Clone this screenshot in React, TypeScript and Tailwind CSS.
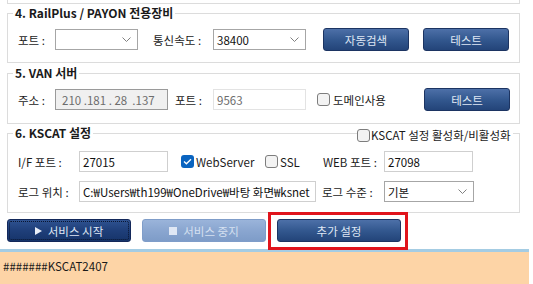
import React from "react";

function Chevron() {
  return (
    <svg width="9" height="5" viewBox="0 0 9 5" className="shrink-0">
      <path d="M0.5 0.5 L4.5 4.5 L8.5 0.5" fill="none" stroke="#808080" strokeWidth="1" />
    </svg>
  );
}

function Combo({ cls, value }: { cls: string; value?: string }) {
  return (
    <div className={`flex h-[21px] items-center justify-between border border-[#a6a6a6] bg-white pl-[3px] pr-[6px] ${cls}`}>
      <span className="leading-[16px] text-[#111]">{value}</span>
      <Chevron />
    </div>
  );
}

function Box({ cls, value }: { cls: string; value: string }) {
  return (
    <div className={`flex h-[21px] items-center overflow-hidden whitespace-nowrap border border-[#cfcfcf] bg-white pl-[3px] ${cls}`}>
      <span className="leading-[16px] text-[#111]">{value}</span>
    </div>
  );
}

function Check({ checked }: { checked?: boolean }) {
  if (checked) {
    return (
      <span className="flex h-[13px] w-[13px] shrink-0 items-center justify-center rounded-[3px] bg-[#0a64c0]">
        <svg width="9" height="7" viewBox="0 0 9 7">
          <path d="M1 3.5 L3.4 5.8 L8 1.2" fill="none" stroke="#fff" strokeWidth="1.3" />
        </svg>
      </span>
    );
  }
  return <span className="block h-[13px] w-[13px] shrink-0 rounded-[3px] border border-[#7d7d7d] bg-[#f3f3f3]" />;
}

function BlueButton({ cls, children }: { cls: string; children: React.ReactNode }) {
  return (
    <div
      className={`flex h-[23px] items-center justify-center rounded-[3px] border border-[#1c3462] bg-gradient-to-b from-[#4d70a8] via-[#33588f] to-[#234479] text-[#dfe7f4] leading-[16px] ${cls}`}
    >
      {children}
    </div>
  );
}

export default function App() {
  return (
    <div className="relative flex h-[284px] w-[533px] flex-col overflow-hidden bg-white font-['Noto_Sans_CJK_KR',sans-serif] text-[11.5px] text-[#1a1a1a]">
      {/* tail of previous group */}
      <div className="ml-[7px] h-[4px] w-[513px] border-x border-b border-[#dcdcdc]" />

      {/* Group 4 */}
      <fieldset className="ml-[7px] mt-[1px] w-[513px] min-w-0 border border-[#dcdcdc]">
        <legend className="ml-[5px] px-[2px] text-[12px] font-bold leading-[16px] text-[#1a1a1a]">4. RailPlus / PAYON 전용장비</legend>
        <div className="flex h-[23px] items-center pl-[10px] mt-[7px] mb-[11px]">
          <span className="w-[37px] leading-[16px]">포트 :</span>
          <Combo cls="w-[83px]" />
          <span className="ml-[15px] w-[60px] leading-[16px]">통신속도 :</span>
          <Combo cls="w-[93px]" value="38400" />
          <BlueButton cls="ml-[17px] w-[86px]">자동검색</BlueButton>
          <BlueButton cls="ml-[14px] w-[86px]">테스트</BlueButton>
        </div>
      </fieldset>

      {/* Group 5 */}
      <fieldset className="ml-[7px] mt-[2px] w-[513px] min-w-0 border border-[#dcdcdc]">
        <legend className="ml-[5px] px-[2px] text-[12px] font-bold leading-[16px]">5. VAN 서버</legend>
        <div className="flex h-[23px] items-center pl-[10px] pr-[9px] mt-[7px] mb-[12px]">
          <span className="w-[37px] leading-[16px]">주소 :</span>
          <div className="flex h-[21px] w-[113px] items-center border border-[#9a9a9a] bg-[#f0f0f0] pl-[6px] text-[#6d6d6d]">
            <span className="leading-[16px] whitespace-pre">210 .181 . 28  .137</span>
          </div>
          <span className="ml-[7px] w-[38px] leading-[16px]">포트 :</span>
          <div className="flex h-[21px] w-[93px] items-center border border-[#e3e3e3] bg-white pl-[3px] text-[#6d6d6d]">
            <span className="leading-[16px]">9563</span>
          </div>
          <div className="ml-[11px] flex items-center gap-[3px]">
            <Check />
            <span className="leading-[16px]">도메인사용</span>
          </div>
          <BlueButton cls="ml-auto w-[86px]">테스트</BlueButton>
        </div>
      </fieldset>

      {/* Group 6 */}
      <div className="relative mt-[1px]">
        <fieldset className="ml-[7px] w-[513px] min-w-0 border border-[#dcdcdc]">
          <legend className="ml-[5px] px-[2px] text-[12px] font-bold leading-[16px]">6. KSCAT 설정</legend>
          <div className="mt-[10px] flex h-[21px] items-center pl-[10px]">
            <span className="w-[61px] leading-[16px]">I/F 포트 :</span>
            <Box cls="w-[89px]" value="27015" />
            <div className="ml-[13px] flex w-[84px] items-center gap-[2px]">
              <Check checked />
              <span className="leading-[16px]">WebServer</span>
            </div>
            <div className="flex w-[58px] items-center gap-[2px]">
              <Check />
              <span className="leading-[16px]">SSL</span>
            </div>
            <span className="w-[61px] leading-[16px]">WEB 포트 :</span>
            <Box cls="w-[89px]" value="27098" />
          </div>
          <div className="mb-[10px] mt-[9px] flex h-[21px] items-center pl-[10px]">
            <span className="w-[61px] leading-[16px]">로그 위치 :</span>
            <Box cls="w-[237px]" value="C:₩Users₩th199₩OneDrive₩바탕 화면₩ksnet" />
            <span className="ml-[6px] w-[62px] leading-[16px]">로그 수준 :</span>
            <Combo cls="w-[90px]" value="기본" />
          </div>
        </fieldset>
        <div className="absolute left-[357px] top-[2px] flex items-center gap-[1px] bg-white pr-[2px]">
          <Check />
          <span className="leading-[16px]">KSCAT 설정 활성화/비활성화</span>
        </div>
      </div>

      {/* Bottom buttons */}
      <div className="flex items-center gap-[11px] pl-[7px] pt-[6px] pb-[7px]">
        <div className="flex h-[23px] w-[124px] items-center justify-center rounded-[3px] border border-[#13285a] bg-gradient-to-b from-[#2f5391] via-[#1f3f7a] to-[#16346a] p-[1px]">
          <div className="flex h-full w-full items-center justify-center gap-[6px] rounded-[2px] border border-dotted border-[#0a1530] text-[#dfe7f4]">
            <svg width="7" height="8" viewBox="0 0 7 8">
              <path d="M0 0 L7 4 L0 8 Z" fill="#e8eef8" />
            </svg>
            <span className="leading-[16px]">서비스 시작</span>
          </div>
        </div>
        <div className="flex h-[23px] w-[124px] items-center justify-center gap-[6px] rounded-[3px] border border-[#7f9dc9] bg-gradient-to-b from-[#9ab4da] via-[#8aa6d0] to-[#7e9cc8] text-[#d5e0f0]">
          <span className="block h-[8px] w-[8px] bg-[#dfe7f4]" />
          <span className="leading-[16px]">서비스 중지</span>
        </div>
        <div className="relative">
          <BlueButton cls="w-[124px]">추가 설정</BlueButton>
          <div className="pointer-events-none absolute left-[-9px] right-[-7px] top-[-7px] bottom-[-8px] border-[3px] border-[#e0141c]" />
        </div>
      </div>

      {/* Status area */}
      <div className="flex flex-1">
        <div className="w-[529px] border-t-[3px] border-[#a4cce3] bg-[#fdd4a6] pl-[3px] pt-[6px]">
          <span className="leading-[16px] text-[#1a1a1a]">#######KSCAT2407</span>
        </div>
      </div>
    </div>
  );
}
